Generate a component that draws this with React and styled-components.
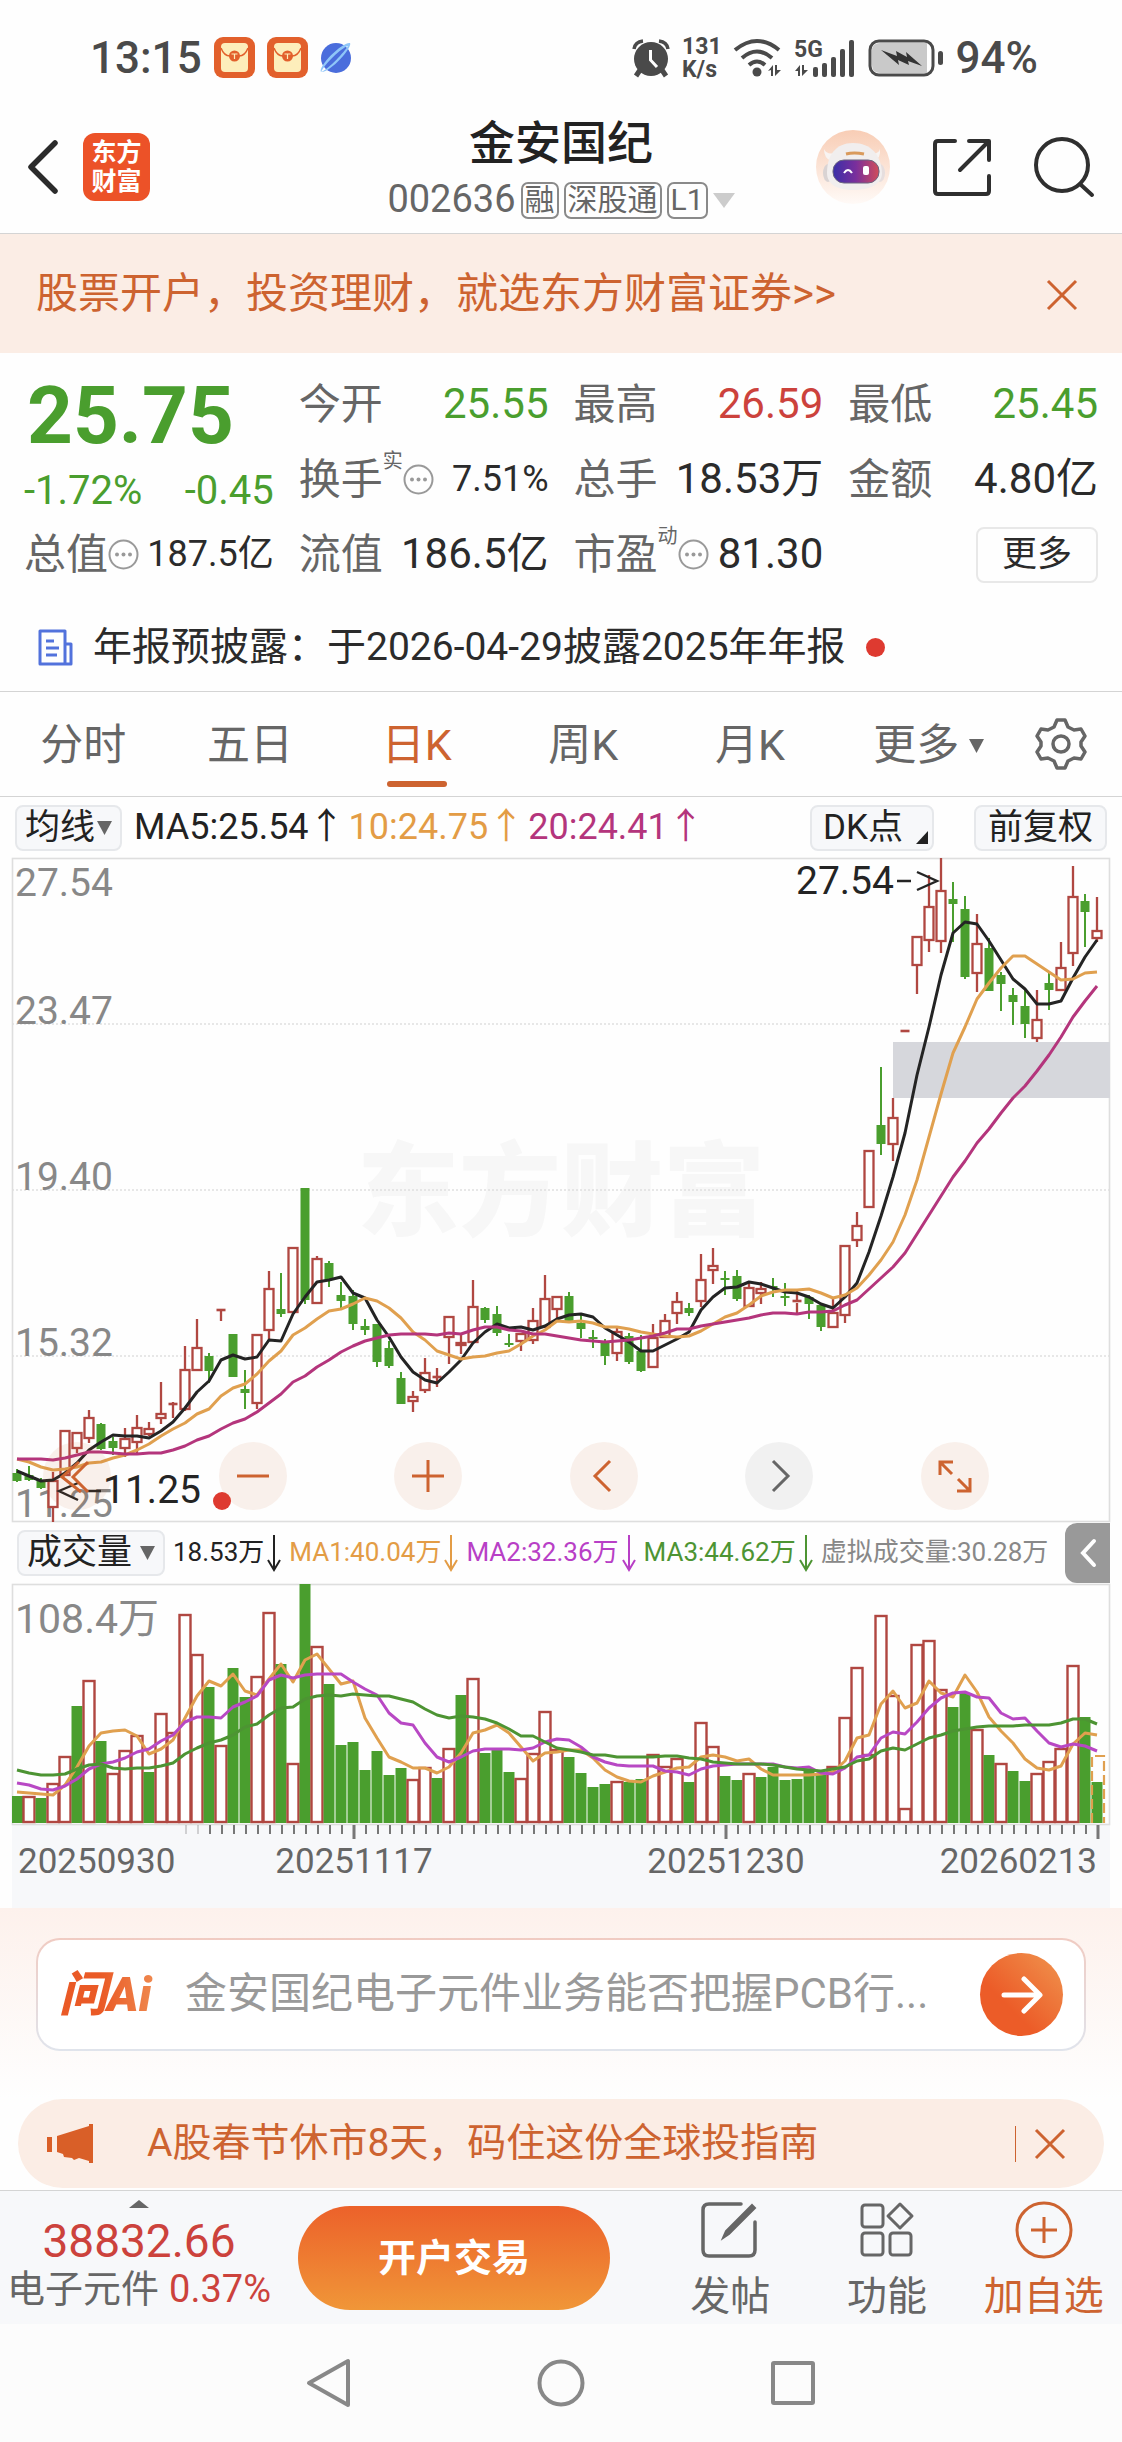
import React, { useState } from 'react'
import styled, { createGlobalStyle } from 'styled-components'

const GlobalStyle = createGlobalStyle`
  * {
    box-sizing: border-box;
  }
  body {
    margin: 0;
    background: #fefefe;
    color: #2b2b2b;
    font-family: Roboto, "Noto Sans CJK SC", sans-serif;
    line-height: 1.2;
  }
  button, input, select {
    margin: 0;
    padding: 0;
    border: none;
    background: none;
    color: inherit;
    font: inherit;
  }
  button {
    cursor: pointer;
  }
  svg {
    display: block;
    flex: none;
    overflow: visible;
  }
`

const GREEN = '#4a9e2e'
const RED = '#cc423c'
const ORANGE = '#cd6330'
const BAR_RED = '#b04741'

const Page = styled.main`
  display: flex;
  flex-direction: column;
  width: 100%;
`

/* ---------- status bar ---------- */

const StatusBar = styled.div`
  display: flex;
  align-items: center;
  justify-content: space-between;
  height: 116px;
  padding: 0 84px 0 90px;
  color: #4a4a4a;
  font-size: 44px;
  font-weight: 500;
`

const StatusGroup = styled.div`
  display: flex;
  align-items: center;
  gap: 12px;
`

const Speed = styled.div`
  display: flex;
  flex-direction: column;
  font-size: 23px;
  font-weight: 700;
  line-height: 23px;
`

/* ---------- header ---------- */

const Header = styled.header`
  display: grid;
  grid-template-columns: 1fr auto 1fr;
  height: 118px;
  border-bottom: 1px solid #d4d4d4;
`

const HeaderSide = styled.div`
  display: flex;
  align-items: center;
  justify-content: ${(p) => (p.$end ? 'flex-end' : 'flex-start')};
  gap: ${(p) => (p.$end ? 43 : 25)}px;
  padding: 0 28px;
  height: 102px;
`

const Logo = styled.a`
  display: flex;
  align-items: center;
  justify-content: center;
  width: 67px;
  height: 68px;
  border-radius: 12px;
  background: #ec5228;
  color: #fff;
  font-size: 25px;
  font-weight: 700;
  line-height: 29px;
  text-align: center;
  text-decoration: none;
`

const TitleBox = styled.div`
  display: flex;
  flex-direction: column;
  align-items: center;
`

const Title = styled.h1`
  margin: 0;
  font-size: 46px;
  font-weight: 500;
  line-height: 54px;
  color: #222;
`

const CodeLine = styled.button`
  display: flex;
  align-items: center;
  gap: 5px;
  height: 60px;
  color: #666;
  font-size: 38px;
`

const Tag = styled.span`
  height: 37px;
  padding: 0 2px;
  border: 2px solid #8a8a8a;
  border-radius: 7px;
  font-size: 30px;
  line-height: 32px;
`

/* ---------- open account banner ---------- */

const Banner = styled.section`
  display: flex;
  align-items: center;
  justify-content: space-between;
  height: 119px;
  padding: 2px 44px 0 36px;
  background: #fbede5;
  color: ${ORANGE};
  font-size: 42px;

  a {
    color: inherit;
    text-decoration: none;
  }
`

/* ---------- quote ---------- */

const Quote = styled.section`
  display: grid;
  grid-template-columns: repeat(4, 1fr);
  grid-auto-rows: 75px;
  column-gap: 25px;
  padding: 14px 24px 0;
`

const Summary = styled.div`
  grid-row: span 2;
  color: ${GREEN};
`

const Price = styled.div`
  padding-left: 3px;
  font-size: 80px;
  font-weight: 700;
  line-height: 98px;
`

const Change = styled.div`
  display: flex;
  justify-content: space-between;
  font-size: 40px;
  line-height: 52px;
`

const Cell = styled.div`
  display: flex;
  align-items: center;
  justify-content: space-between;
  white-space: nowrap;
`

const CellLabel = styled.span`
  display: flex;
  align-items: center;
  color: #666;
  font-size: 42px;
  line-height: 60px;

  sup {
    align-self: flex-start;
    font-size: 20px;
    line-height: 22px;
  }
`

const CellValue = styled.span`
  color: ${(p) => p.$color || '#2b2b2b'};
  font-size: ${(p) => (p.$small ? 36 : 42)}px;
`

const MoreButton = styled.button`
  margin-left: auto;
  width: 122px;
  height: 56px;
  border: 2px solid #e8e8e8;
  border-radius: 8px;
  font-size: 35px;
  line-height: 48px;
`

const Notice = styled.a`
  display: flex;
  align-items: center;
  padding: 30px 38px 19px;
  border-bottom: 1px solid #d4d4d4;
  color: #2b2b2b;
  font-size: 39px;
  line-height: 50px;
  text-decoration: none;

  span {
    margin: 0 20px;
  }
`

const Dot = styled.i`
  width: 19px;
  height: 19px;
  border-radius: 50%;
  background: #de3a30;
`

/* ---------- period tabs ---------- */

const Tabs = styled.nav`
  display: grid;
  grid-template-columns: repeat(6, 1fr) 122px;
  height: 105px;
  border-bottom: 1px solid #d4d4d4;
`

const Tab = styled.button`
  position: relative;
  display: flex;
  align-items: center;
  justify-content: center;
  gap: 10px;
  padding-top: 4px;
  padding-left: ${(p) => (p.$caret ? 24 : 0)}px;
  color: ${(p) => (p.$active ? ORANGE : '#666')};
  font-size: 43px;

  &::after {
    content: "";
    display: ${(p) => (p.$active ? 'block' : 'none')};
    position: absolute;
    left: calc(50% - 30px);
    bottom: 9px;
    width: 60px;
    height: 6px;
    border-radius: 3px;
    background: ${ORANGE};
  }
`

const Gear = styled.button`
  display: flex;
  align-items: center;
  justify-content: center;
`

/* ---------- charts ---------- */

const ChartArea = styled.section`
  padding: 0 12px;
`

const IndicatorRow = styled.div`
  display: flex;
  align-items: center;
  justify-content: space-between;
  height: 61px;
  padding: 0 3px;
  font-size: 36px;
  white-space: nowrap;
`

const IndicatorGroup = styled.div`
  display: flex;
  align-items: center;
  gap: ${(p) => p.$gap}px;
`

const Pill = styled.span`
  position: relative;
  flex: none;
  display: inline-flex;
  align-items: center;
  height: 46px;
  border: 2px solid #e6e8eb;
  border-radius: 8px;
  background: #f7f8fa;
  color: #222;
  font-size: 35px;
  margin-right: ${(p) => p.$after || 0}px;

  select, button {
    height: 42px;
    padding: 0 ${(p) => p.$right || 8}px 0 ${(p) => p.$left || 8}px;
    line-height: 40px;
    appearance: none;
  }
  svg {
    position: absolute;
    right: ${(p) => p.$icon || 8}px;
    bottom: ${(p) => p.$iconBottom || 14}px;
    pointer-events: none;
  }
`

const MaValue = styled.span`
  color: ${(p) => p.$color};
`

const ChartBox = styled.div`
  position: relative;

  > svg {
    width: 100%;
    height: auto;
  }
`

const ChartTools = styled.div`
  position: absolute;
  left: 31px;
  right: 121px;
  bottom: 12px;
  display: flex;
  justify-content: space-between;
`

const RoundTool = styled.button`
  display: flex;
  align-items: center;
  justify-content: center;
  width: 68px;
  height: 68px;
  border-radius: 50%;
  background: ${(p) => (p.$muted ? 'rgba(0, 0, 0, 0.05)' : 'rgba(205, 99, 48, 0.09)')};
  color: ${(p) => (p.$muted ? '#666' : ORANGE)};
`

const VolumeRow = styled.div`
  display: flex;
  align-items: center;
  gap: 8px;
  height: 62px;
  padding-left: 5px;
  font-size: 26px;
  white-space: nowrap;
`

const VolumeValue = styled.span`
  display: inline-flex;
  align-items: center;
  gap: 3px;
  color: ${(p) => p.$color};
`

const Collapse = styled.button`
  flex: none;
  display: flex;
  align-items: center;
  justify-content: center;
  width: 45px;
  height: 60px;
  margin-left: auto;
  border-radius: 12px 0 0 12px;
  background: #999;
`

/* ---------- ask ai + tips ---------- */

const AskSection = styled.section`
  padding: 30px 36px 48px;
  background: linear-gradient(#fdf1ec, #fefefe);
`

const AskBox = styled.form`
  display: flex;
  align-items: center;
  height: 113px;
  padding: 0 21px;
  border: 2px solid transparent;
  border-radius: 24px;
  background:
    linear-gradient(#fff, #fff) padding-box,
    linear-gradient(#f0cbc2, #e0e4ec) border-box;

  input {
    flex: 1;
    min-width: 0;
    margin: 0 24px 0 22px;
    font-size: 42px;
    outline: none;
  }
  input::placeholder {
    color: #999;
    opacity: 1;
  }
`

const AskLogo = styled.span`
  width: 104px;
  font-size: 48px;
  font-style: italic;
  font-weight: 900;
  line-height: 50px;
  color: transparent;
  background: linear-gradient(90deg, #ea5a26 40%, #f09055);
  background-clip: text;
`

const AskSend = styled.button`
  display: flex;
  align-items: center;
  justify-content: center;
  width: 83px;
  height: 83px;
  border-radius: 50%;
  background: linear-gradient(45deg, #ec5c28 35%, #f0954f);
`

const TipBar = styled.section`
  display: flex;
  align-items: center;
  height: 89px;
  margin: 0 18px 2px;
  padding: 0 38px 0 29px;
  border-radius: 45px;
  background: #fbede5;
  color: ${ORANGE};
  font-size: 39px;

  a {
    flex: 1;
    margin-left: 54px;
    color: inherit;
    text-decoration: none;
  }
  button {
    padding-left: 18px;
    border-left: 1px solid ${ORANGE};
    height: 36px;
  }
`

/* ---------- bottom bar ---------- */

const BottomBar = styled.footer`
  display: grid;
  grid-template-columns: 298fr 354fr 470fr;
  height: 134px;
  border-top: 1px solid #d4d4d4;
  background: #f7f8fa;
`

const IndexBox = styled.button`
  display: flex;
  flex-direction: column;
  align-items: center;
  padding: 9px 24px 0 4px;
  white-space: nowrap;
`

const IndexValue = styled.span`
  color: ${RED};
  font-size: 46px;
  line-height: 66px;
`

const IndexName = styled.span`
  color: #666;
  font-size: 38px;
  line-height: 30px;

  b {
    margin-left: 10px;
    color: ${RED};
    font-weight: 400;
  }
`

const TradeButton = styled.button`
  align-self: start;
  height: 104px;
  margin: 15px 42px 0 0;
  padding-top: 2px;
  border-radius: 52px;
  background: linear-gradient(#ec612a, #f09638);
  color: #fff;
  font-size: 38px;
  font-weight: 700;
`

const Actions = styled.div`
  display: grid;
  grid-template-columns: repeat(3, 1fr);
`

const Action = styled.button`
  display: flex;
  flex-direction: column;
  align-items: center;
  padding-top: 9px;
  color: ${(p) => (p.$accent ? ORANGE : '#666')};
  font-size: 40px;
  line-height: 74px;
`

const SystemNav = styled.nav`
  display: flex;
  justify-content: center;
  gap: 184px;
  height: 118px;
  background: #fcfcfc;
`

/* ---------- chart data ---------- */

const STEP = 12
const FIRST = 5
const xOf = (i) => FIRST + i * STEP

// [up, high, top, bottom, low] for each day, in chart units
const candles = [
  [0, 611, 615, 623, 624], [0, 608, 617, 622, 623], [0, 620, 622, 630, 631], [1, 614, 622, 650, 664],
  [1, 572, 572, 618, 618], [1, 574, 574, 591, 595], [1, 552, 559, 581, 585], [0, 565, 566, 591, 592],
  [0, 579, 583, 590, 597], [1, 570, 580, 591, 599], [1, 557, 569, 585, 595], [1, 564, 570, 577, 578],
  [1, 524, 555, 561, 566], [1, 544, 546, 547, 560], [1, 488, 511, 552, 553], [1, 461, 489, 513, 513],
  [0, 495, 498, 513, 525], [1, 451, 452, 452, 463], [0, 476, 476, 519, 519], [0, 512, 531, 535, 551],
  [1, 476, 476, 546, 551], [1, 413, 430, 473, 482], [0, 415, 451, 456, 459], [1, 389, 389, 455, 455],
  [0, 330, 330, 442, 446], [1, 398, 400, 446, 446], [0, 403, 405, 422, 429], [0, 424, 437, 443, 450],
  [0, 432, 438, 466, 472], [0, 461, 468, 472, 477], [0, 466, 466, 504, 509], [0, 483, 490, 508, 510],
  [0, 514, 520, 546, 546], [1, 533, 538, 544, 554], [1, 500, 514, 533, 535], [1, 510, 519, 520, 529],
  [1, 458, 458, 480, 506], [1, 475, 484, 488, 496], [1, 422, 448, 485, 485], [0, 449, 450, 462, 465],
  [0, 448, 456, 475, 478], [0, 476, 485, 486, 489], [1, 475, 475, 484, 493], [1, 450, 462, 483, 486],
  [1, 417, 440, 470, 470], [1, 438, 438, 452, 462], [0, 434, 438, 465, 465], [0, 457, 465, 471, 480],
  [0, 472, 479, 481, 490], [0, 481, 484, 498, 507], [1, 470, 473, 496, 503], [0, 475, 478, 504, 506],
  [0, 477, 493, 513, 514], [1, 466, 479, 510, 510], [1, 456, 462, 480, 480], [1, 434, 443, 456, 466],
  [0, 445, 450, 455, 458], [1, 396, 421, 444, 449], [1, 390, 407, 413, 426], [0, 413, 420, 422, 437],
  [0, 412, 418, 441, 443], [1, 425, 429, 449, 449], [1, 424, 430, 436, 446], [0, 420, 428, 430, 439],
  [0, 425, 438, 439, 448], [1, 432, 443, 445, 455], [0, 437, 439, 446, 461], [0, 445, 447, 469, 473],
  [1, 440, 454, 470, 470], [1, 387, 387, 458, 465], [1, 354, 367, 383, 389], [1, 292, 292, 350, 350],
  [0, 209, 267, 286, 297], [1, 240, 259, 287, 303], [1, 173, 173, 173, 173], [1, 78, 78, 108, 136],
  [1, 17, 48, 83, 94], [1, 0, 32, 84, 95], [0, 24, 41, 46, 84], [0, 38, 51, 119, 121],
  [1, 56, 85, 116, 134], [0, 80, 90, 133, 133], [0, 114, 117, 126, 153], [0, 130, 137, 144, 167],
  [0, 130, 148, 166, 180], [1, 132, 161, 181, 184], [0, 115, 125, 132, 152], [1, 84, 109, 133, 133],
  [1, 8, 38, 96, 108], [0, 36, 43, 54, 89], [1, 39, 72, 81, 84],
]

const ma5 = [
  613, 618, 623, 622, 615, 605, 592, 584, 577, 578, 578, 580, 573, 564, 550, 534, 523, 502, 497, 501,
  499, 482, 483, 456, 439, 424, 422, 419, 435, 440, 462, 479, 499, 514, 522, 525, 514, 502, 485, 474,
  466, 470, 469, 472, 468, 461, 457, 456, 459, 470, 477, 484, 493, 493, 487, 481, 474, 452, 439, 430,
  429, 424, 426, 430, 434, 435, 439, 446, 450, 439, 425, 394, 358, 319, 275, 217, 169, 117, 75, 64,
  66, 83, 102, 121, 131, 146, 146, 143, 120, 99, 82,
]

const ma10 = [
  601, 604, 609, 612, 611, 609, 605, 604, 600, 597, 592, 586, 578, 571, 565, 556, 551, 538, 530, 526,
  516, 503, 493, 477, 470, 461, 453, 451, 446, 440, 443, 450, 460, 474, 482, 493, 497, 501, 499, 498,
  495, 493, 486, 478, 472, 463, 464, 463, 465, 469, 469, 471, 474, 476, 478, 479, 478, 473, 466, 459,
  455, 447, 438, 434, 432, 432, 431, 435, 440, 437, 430, 417, 402, 384, 357, 322, 279, 236, 195, 169,
  141, 125, 110, 98, 98, 106, 114, 122, 121, 115, 114,
]

const ma20 = [
  601, 601, 601, 602, 600, 597, 594, 594, 595, 596, 596, 595, 595, 592, 588, 582, 578, 571, 565, 561,
  554, 545, 536, 524, 518, 509, 502, 494, 488, 483, 480, 477, 476, 476, 476, 477, 475, 476, 472, 469,
  469, 472, 473, 476, 476, 478, 480, 482, 483, 484, 483, 482, 480, 478, 475, 471, 471, 468, 466, 464,
  462, 460, 457, 455, 455, 456, 454, 454, 453, 447, 442, 431, 420, 409, 395, 376, 357, 338, 319, 303,
  285, 271, 255, 240, 228, 213, 197, 179, 159, 143, 128,
]

// [up, top]
const volumes = [
  [0, 212], [1, 212], [0, 214], [1, 199], [1, 172], [0, 122], [1, 96], [0, 157], [1, 189], [1, 166],
  [1, 151], [0, 188], [1, 129], [1, 148], [1, 30], [1, 70], [0, 103], [1, 161], [0, 84], [0, 113],
  [1, 92], [1, 28], [0, 80], [1, 179], [0, 0], [1, 62], [0, 100], [0, 161], [0, 158], [0, 186],
  [0, 167], [0, 191], [0, 184], [1, 195], [1, 183], [0, 194], [1, 164], [0, 111], [1, 94], [0, 169],
  [0, 166], [0, 188], [1, 194], [1, 169], [1, 127], [1, 165], [0, 173], [0, 189], [0, 203], [0, 200],
  [1, 197], [0, 198], [0, 195], [1, 170], [1, 182], [1, 174], [0, 198], [1, 138], [1, 162], [0, 192],
  [0, 196], [1, 189], [0, 193], [0, 183], [0, 196], [0, 195], [0, 187], [0, 191], [1, 182], [1, 133],
  [1, 83], [1, 170], [1, 31], [1, 111], [1, 224], [1, 60], [1, 56], [1, 105], [0, 123], [0, 109],
  [1, 145], [0, 171], [1, 179], [0, 187], [0, 197], [1, 189], [1, 177], [1, 164], [1, 81], [0, 133],
  [0, 198],
]

const volMa1 = [
  208, 209, 210, 211, 201, 183, 162, 149, 147, 146, 152, 170, 165, 156, 134, 112, 97, 102, 90, 107,
  111, 95, 80, 98, 76, 70, 85, 100, 97, 134, 154, 173, 178, 184, 184, 189, 183, 169, 149, 146,
  141, 149, 163, 177, 169, 168, 166, 166, 174, 186, 193, 197, 198, 192, 188, 184, 183, 173, 171, 173,
  177, 175, 185, 191, 191, 191, 191, 190, 188, 177, 154, 151, 120, 107, 124, 119, 97, 109, 113, 91,
  108, 133, 147, 159, 175, 184, 186, 182, 160, 149, 151,
]

const volMa2 = [
  199, 201, 205, 206, 202, 195, 185, 180, 178, 174, 168, 165, 157, 151, 138, 133, 133, 134, 123, 118,
  112, 96, 91, 94, 91, 90, 90, 90, 98, 105, 111, 129, 139, 141, 159, 173, 178, 173, 167, 165,
  165, 165, 166, 164, 158, 155, 156, 163, 173, 178, 181, 182, 182, 182, 187, 188, 191, 185, 182, 181,
  180, 180, 180, 180, 183, 184, 183, 189, 190, 184, 173, 171, 154, 148, 150, 138, 124, 114, 109, 108,
  113, 114, 129, 135, 134, 147, 159, 163, 160, 162, 167,
]

const volMa3 = [
  186, 189, 191, 191, 190, 185, 181, 180, 184, 185, 184, 184, 182, 179, 170, 164, 159, 156, 151, 143,
  140, 131, 124, 123, 115, 112, 111, 112, 110, 111, 112, 112, 115, 118, 125, 131, 134, 132, 133, 135,
  139, 145, 152, 152, 158, 164, 166, 168, 171, 171, 173, 173, 173, 173, 172, 172, 174, 175, 178, 179,
  180, 180, 180, 181, 183, 185, 186, 187, 185, 183, 177, 175, 167, 164, 166, 160, 154, 151, 147, 145,
  143, 142, 142, 142, 141, 141, 141, 139, 135, 135, 140,
]

const toPoints = (values) => values.map((y, i) => `${xOf(i)},${y}`).join(' ')

const Line = ({ values, color }) => (
  <polyline points={toPoints(values)} fill="none" stroke={color} strokeWidth="3" strokeLinejoin="round" />
)

const Candle = ({ i, data }) => {
  const [up, high, top, bottom, low] = data
  const x = xOf(i)
  if (!up) {
    return (
      <g fill={GREEN}>
        <rect x={x - 1} y={high} width="2" height={low - high} />
        <rect x={x - 4.5} y={top} width="9" height={Math.max(bottom - top, 2)} />
      </g>
    )
  }
  return (
    <g stroke={BAR_RED} strokeWidth="2.3" fill="#fff">
      <path d={`M${x} ${high}V${top}M${x} ${bottom}V${low}`} />
      {bottom - top < 3 ? (
        <path d={`M${x - 4.5} ${top}h9`} strokeWidth="2.6" />
      ) : (
        <rect x={x - 4.5} y={top + 1} width="9" height={bottom - top - 2} />
      )}
    </g>
  )
}

const PRICE_LABELS = [
  ['27.54', 38],
  ['23.47', 166],
  ['19.40', 332],
  ['15.32', 498],
  ['11.25', 659],
]

function PriceChart() {
  return (
    <svg viewBox="0 0 1098 664" fontFamily='Roboto, "Noto Sans CJK SC", sans-serif'>
      <text x="549" y="370" textAnchor="middle" fontSize="102" fontWeight="900" fill="#f7f7f7">东方财富</text>
      {[166, 332, 498].map((y) => (
        <line key={y} x1="0" x2="1098" y1={y} y2={y} stroke="#e0e0e0" strokeWidth="1.5" strokeDasharray="2 2" />
      ))}
      <rect x="0.5" y="0.5" width="1097" height="663" fill="none" stroke="#dedede" strokeWidth="1.6" />
      {PRICE_LABELS.map(([label, y]) => (
        <text key={label} x="3" y={y} fontSize="39" fill="#888">{label}</text>
      ))}
      <rect x="881" y="184" width="217" height="56" fill="#d6d7dc" />
      {candles.map((c, i) => <Candle key={i} i={i} data={c} />)}
      <Line values={ma5} color="#242424" />
      <Line values={ma10} color="#e0a04f" />
      <Line values={ma20} color="#b4357c" />
      <g fill="#242424" fontSize="39">
        <text x="784" y="36">27.54</text>
        <text x="189" y="645" textAnchor="end">11.25</text>
      </g>
      <path d="M885 23h14M905 14l20 9l-20 9M75 633h14M66 625l-19 8l19 9" fill="none" stroke="#242424" strokeWidth="2.4" />
      <circle cx="210" cy="643" r="9" fill="#de3a30" />
    </svg>
  )
}

const BIG_TICKS = [28, 59, 90]

function VolumeChart() {
  return (
    <svg viewBox="0 0 1098 324" fontFamily='Roboto, "Noto Sans CJK SC", sans-serif'>
      <rect x="0" y="240" width="1098" height="84" fill="#f7f8fa" />
      <rect x="0.5" y="0.5" width="1097" height="240" fill="#fefefe" stroke="#dedede" strokeWidth="1.6" />
      <text x="3" y="49" fontSize="41" fill="#888">108.4万</text>
      {volumes.map(([up, top], i) =>
        up ? (
          <rect key={i} x={xOf(i) - 5.5} y={top + 1} width="11" height={237 - top} fill="#fff" stroke={BAR_RED} strokeWidth="2.4" />
        ) : (
          <rect key={i} x={Math.max(xOf(i) - 5.5, 0)} y={top} width="11" height={239 - top} fill={GREEN} />
        )
      )}
      <path d="M1080 239V172H1092V239" fill="none" stroke="#e0a04f" strokeWidth="2.2" strokeDasharray="10 4" />
      <Line values={volMa1} color="#e0a04f" />
      <Line values={volMa2} color="#b848c4" />
      <Line values={volMa3} color="#4d9433" />
      {volumes.map((_, i) => {
        if (i < 14) return null
        const big = BIG_TICKS.includes(i)
        return (
          <line
            key={i}
            x1={xOf(i) + 1}
            x2={xOf(i) + 1}
            y1="241"
            y2={big ? 255 : 250}
            stroke="#777"
            strokeWidth={big ? 3 : 2}
            opacity={i < 16 ? 0.3 : 1}
          />
        )
      })}
      <g fill="#666" fontSize="35">
        <text x="6" y="289">20250930</text>
        <text x="342" y="289" textAnchor="middle">20251117</text>
        <text x="714" y="289" textAnchor="middle">20251230</text>
        <text x="1085" y="289" textAnchor="end">20260213</text>
      </g>
    </svg>
  )
}

/* ---------- icons ---------- */

const CloseIcon = () => (
  <svg width="32" height="32" viewBox="0 0 32 32" stroke={ORANGE} strokeWidth="3">
    <path d="M2 2L30 30M30 2L2 30" />
  </svg>
)

const InfoIcon = () => (
  <svg width="31" height="31" viewBox="0 0 31 31">
    <circle cx="15.5" cy="15.5" r="14" fill="none" stroke="#999" strokeWidth="2" />
    <g fill="#999">
      <circle cx="9" cy="15.5" r="2" />
      <circle cx="15.5" cy="15.5" r="2" />
      <circle cx="22" cy="15.5" r="2" />
    </g>
  </svg>
)

const Triangle = ({ w = 14, h = 12, color = '#666', up }) => (
  <svg width={w} height={h} viewBox="0 0 14 12" preserveAspectRatio="none">
    <path d={up ? 'M0 12H14L7 0Z' : 'M0 0H14L7 12Z'} fill={color} />
  </svg>
)

const PacketIcon = () => (
  <svg width="41" height="41" viewBox="0 0 41 41">
    <rect width="41" height="41" rx="9" fill="#e2602c" />
    <rect x="7" y="6" width="27" height="29" rx="4" fill="#fdeebb" />
    <path d="M7 11Q10 19 16 19M34 11Q31 19 25 19" fill="none" stroke="#e2602c" strokeWidth="1.5" />
    <circle cx="20.5" cy="19" r="5.5" fill="#e2602c" />
    <path d="M17.5 17h6M20.5 17v5" stroke="#fdeebb" strokeWidth="1.2" />
  </svg>
)

const PlanetIcon = () => (
  <svg width="32" height="32" viewBox="0 0 32 32">
    <circle cx="16" cy="16" r="15" fill="#4a6ddc" />
    <path d="M1 30C-2 24 22 0 30 1C33 5 10 31 1 30C8 28 25 9 28 4C21 6 5 22 1 30Z" fill="#8fc6f8" />
  </svg>
)

const AlarmIcon = () => (
  <svg width="38" height="38" viewBox="0 0 38 38">
    <circle cx="19" cy="20" r="17" fill="#4a4a4a" />
    <path d="M2 10Q3 3 11 2M27 2Q35 3 36 10" fill="none" stroke="#4a4a4a" strokeWidth="3.5" />
    <path d="M8 31L4 37M30 31L34 37" stroke="#4a4a4a" strokeWidth="5" />
    <path d="M18.5 11V21L25 28" fill="none" stroke="#fff" strokeWidth="3" />
  </svg>
)

const WifiIcon = () => (
  <svg width="48" height="38" viewBox="0 0 48 38">
    <g fill="none" stroke="#4a4a4a" strokeWidth="4">
      <path d="M1 11Q23 -7 45 11" />
      <path d="M8 19Q23 6 38 19" />
      <path d="M15 26Q23 19 31 26" />
    </g>
    <circle cx="23" cy="33" r="4.5" fill="#4a4a4a" />
    <path d="M34 32L39 26V37H37V31ZM41 26V37L47 31H43V26Z" fill="#4a4a4a" />
  </svg>
)

const SignalIcon = () => (
  <svg width="62" height="38" viewBox="0 0 62 38" fill="#4a4a4a">
    <text x="0" y="18" fontSize="23" fontWeight="700" fontFamily="Roboto, sans-serif">5G</text>
    <path d="M1 32L6 26V37H4V32ZM8 26V37L14 31H10V26Z" />
    <rect x="19" y="28" width="5" height="10" rx="2" />
    <rect x="28" y="24" width="5" height="14" rx="2" />
    <rect x="37" y="18" width="5" height="20" rx="2" />
    <rect x="46" y="10" width="5" height="28" rx="2" />
    <rect x="55" y="1" width="5" height="37" rx="2" />
  </svg>
)

const BatteryIcon = () => (
  <svg width="76" height="38" viewBox="0 0 76 38">
    <rect x="2" y="2" width="63" height="34" rx="9" fill="#fff" stroke="#4a4a4a" strokeWidth="3" />
    <path d="M12 4H59V34H12Q4 34 4 26V12Q4 4 12 4Z" fill="#c9c9c9" />
    <path d="M13 11L29 17L28 12L39 18L38 13L54 27L40 22L41 26L30 21L31 26Z" fill="#333" />
    <rect x="70" y="12" width="5" height="14" rx="2.5" fill="#4a4a4a" />
  </svg>
)

const BackIcon = () => (
  <svg width="30" height="54" viewBox="0 0 30 54">
    <path d="M27 3L3 27L27 51" fill="none" stroke="#2b2b2b" strokeWidth="5.5" strokeLinecap="round" strokeLinejoin="round" />
  </svg>
)

const RobotIcon = () => (
  <svg width="74" height="74" viewBox="0 0 74 74">
    <defs>
      <linearGradient id="robotBg" x2="0" y2="1">
        <stop offset="0" stopColor="#f8cdb5" />
        <stop offset="1" stopColor="#fffaf7" />
      </linearGradient>
      <linearGradient id="robotFace">
        <stop offset="0" stopColor="#3a2fa8" />
        <stop offset="0.5" stopColor="#7a2f9c" />
        <stop offset="1" stopColor="#d24d5a" />
      </linearGradient>
    </defs>
    <circle cx="37" cy="37" r="37" fill="url(#robotBg)" />
    <path d="M8 19Q8 28 15 31L22 22Q11 26 8 19ZM64 19Q65 28 58 31L51 22Q62 26 64 19Z" fill="#f8f4f2" />
    <ellipse cx="12" cy="43" rx="5" ry="9" fill="#d9d3d3" />
    <ellipse cx="64" cy="43" rx="5" ry="9" fill="#e6dede" />
    <path d="M37 13C55 13 65 25 66 43C66 54 54 60 37 60C21 60 11 54 11 43C11 25 20 13 37 13Z" fill="#f1eeee" />
    <rect x="17" y="30" width="46" height="23" rx="11" fill="url(#robotFace)" stroke="#6a6580" strokeWidth="1" />
    <path d="M28 43Q32 37 36 43" fill="none" stroke="#fff" strokeWidth="2" />
    <rect x="47" y="36" width="6" height="9" rx="2" fill="#fff" />
    <path d="M30 24Q38 22 48 24" fill="none" stroke="#d99a5c" strokeWidth="3" />
  </svg>
)

const ShareIcon = () => (
  <svg width="58" height="58" viewBox="0 0 58 58" fill="none" stroke="#2f2f2f" strokeWidth="4" strokeLinecap="round" strokeLinejoin="round">
    <path d="M22 3H5Q2 3 2 6V53Q2 56 5 56H53Q56 56 56 53V38M36 3H56V22M55 4L27 32" />
  </svg>
)

const SearchIcon = () => (
  <svg width="60" height="60" viewBox="0 0 60 60" fill="none" stroke="#2f2f2f" strokeWidth="4" strokeLinecap="round">
    <circle cx="28" cy="28" r="26" />
    <path d="M46 47L58 58" />
  </svg>
)

const NewsIcon = () => (
  <svg width="35" height="37" viewBox="0 0 35 37" fill="none" stroke="#5272dc" strokeWidth="3" strokeLinejoin="round">
    <path d="M27 35H2V2H27V35H33V15H27" />
    <path d="M8 12H16M8 19H21M8 26H19" />
  </svg>
)

const GearIcon = () => (
  <svg width="52" height="52" viewBox="0 0 52 52" fill="none" stroke="#666" strokeWidth="3.5" strokeLinejoin="round">
    <path d="M22 2H30L33 9L39 12L46 11L50 18L46 24V28L50 34L46 41L39 40L33 43L30 50H22L19 43L13 40L6 41L2 34L6 28V24L2 18L6 11L13 12L19 9Z" />
    <circle cx="26" cy="26" r="8" />
  </svg>
)

const DownArrow = () => (
  <svg width="14" height="36" viewBox="0 0 14 36" fill="none" stroke="currentColor" strokeWidth="2">
    <path d="M7 0V35M1 25L7 35L13 25" />
  </svg>
)

const ToolIcon = ({ d }) => (
  <svg width="40" height="40" viewBox="0 0 40 40" fill="none" stroke="currentColor" strokeWidth="3">
    <path d={d} />
  </svg>
)

const HornIcon = () => (
  <svg width="46" height="40" viewBox="0 0 46 40" fill="#d95f28">
    <path d="M0 13H5V28H0ZM10 12L42 2V0H46V39H42V37L32 34L27 36L25 34L17 33L16 30L10 28Z" />
  </svg>
)

const TOOLS = [
  ['收起', 'M22 6L5 21L24 36M31 6L16 21L31 36'],
  ['缩小', 'M4 20H36'],
  ['放大', 'M4 20H36M20 4V36'],
  ['左移', 'M26 5L11 20L26 35'],
  ['右移', 'M14 5L29 20L14 35'],
  ['全屏', 'M5 19V6H18M5 6L17 18M35 22V35H22M35 35L23 23'],
]

const TABS = ['分时', '五日', '日K', '周K', '月K', '更多']

function App() {
  const [tab, setTab] = useState('日K')
  const [showBanner, setShowBanner] = useState(true)
  const [showTip, setShowTip] = useState(true)

  return (
    <Page>
      <GlobalStyle />

      <StatusBar>
        <StatusGroup>
          <span>13:15</span>
          <PacketIcon />
          <PacketIcon />
          <PlanetIcon />
        </StatusGroup>
        <StatusGroup>
          <AlarmIcon />
          <Speed><span>131</span><span>K/s</span></Speed>
          <WifiIcon />
          <SignalIcon />
          <BatteryIcon />
          <span>94%</span>
        </StatusGroup>
      </StatusBar>

      <Header>
        <HeaderSide>
          <button aria-label="返回"><BackIcon /></button>
          <Logo href="#home">东方<br />财富</Logo>
        </HeaderSide>
        <TitleBox>
          <Title>金安国纪</Title>
          <CodeLine>
            002636
            <Tag>融</Tag>
            <Tag>深股通</Tag>
            <Tag>L1</Tag>
            <Triangle w={22} h={15} color="#ccc" />
          </CodeLine>
        </TitleBox>
        <HeaderSide $end>
          <button aria-label="助手"><RobotIcon /></button>
          <button aria-label="分享"><ShareIcon /></button>
          <button aria-label="搜索"><SearchIcon /></button>
        </HeaderSide>
      </Header>

      {showBanner && (
        <Banner>
          <a href="#open">股票开户，投资理财，就选东方财富证券&gt;&gt;</a>
          <button aria-label="关闭" onClick={() => setShowBanner(false)}><CloseIcon /></button>
        </Banner>
      )}

      <Quote>
        <Summary>
          <Price>25.75</Price>
          <Change><span>-1.72%</span><span>-0.45</span></Change>
        </Summary>
        <Cell><CellLabel>今开</CellLabel><CellValue $color={GREEN}>25.55</CellValue></Cell>
        <Cell><CellLabel>最高</CellLabel><CellValue $color={RED}>26.59</CellValue></Cell>
        <Cell><CellLabel>最低</CellLabel><CellValue $color={GREEN}>25.45</CellValue></Cell>
        <Cell><CellLabel>换手<sup>实</sup><InfoIcon /></CellLabel><CellValue $small>7.51%</CellValue></Cell>
        <Cell><CellLabel>总手</CellLabel><CellValue>18.53万</CellValue></Cell>
        <Cell><CellLabel>金额</CellLabel><CellValue>4.80亿</CellValue></Cell>
        <Cell><CellLabel>总值<InfoIcon /></CellLabel><CellValue $small>187.5亿</CellValue></Cell>
        <Cell><CellLabel>流值</CellLabel><CellValue>186.5亿</CellValue></Cell>
        <Cell><CellLabel>市盈<sup>动</sup><InfoIcon /></CellLabel><CellValue>81.30</CellValue></Cell>
        <Cell><MoreButton>更多</MoreButton></Cell>
      </Quote>

      <Notice href="#notice">
        <NewsIcon />
        <span>年报预披露：于2026-04-29披露2025年年报</span>
        <Dot />
      </Notice>

      <Tabs>
        {TABS.map((name) => (
          <Tab key={name} $active={tab === name} $caret={name === '更多'} onClick={() => setTab(name)}>
            {name}
            {name === '更多' && <Triangle w={15} h={14} />}
          </Tab>
        ))}
        <Gear aria-label="设置"><GearIcon /></Gear>
      </Tabs>

      <ChartArea>
        <IndicatorRow>
          <IndicatorGroup $gap={4}>
            <Pill $right={24} $after={8}>
              <select aria-label="主图指标" defaultValue="均线">
                <option>均线</option>
              </select>
              <Triangle w={15} h={14} />
            </Pill>
            <MaValue $color="#222">MA5:25.54↑</MaValue>
            <MaValue $color="#e39c45">10:24.75↑</MaValue>
            <MaValue $color="#b4357c">20:24.41↑</MaValue>
          </IndicatorGroup>
          <IndicatorGroup $gap={40}>
            <Pill $left={11} $right={29} $icon={4} $iconBottom={5}>
              <button>DK点</button>
              <svg width="12" height="13" viewBox="0 0 12 13"><path d="M12 0V13H0Z" fill="#222" /></svg>
            </Pill>
            <Pill $left={12} $right={12}>
              <button>前复权</button>
            </Pill>
          </IndicatorGroup>
        </IndicatorRow>

        <ChartBox>
          <PriceChart />
          <ChartTools>
            {TOOLS.map(([label, d]) => (
              <RoundTool key={label} aria-label={label} $muted={label === '右移'}>
                <ToolIcon d={d} />
              </RoundTool>
            ))}
          </ChartTools>
        </ChartBox>

        <VolumeRow>
          <Pill $right={30}>
            <select aria-label="副图指标" defaultValue="成交量">
              <option>成交量</option>
            </select>
            <Triangle w={15} h={14} />
          </Pill>
          <VolumeValue $color="#222">18.53万<DownArrow /></VolumeValue>
          <VolumeValue $color="#e39c45">MA1:40.04万<DownArrow /></VolumeValue>
          <VolumeValue $color="#b83fc6">MA2:32.36万<DownArrow /></VolumeValue>
          <VolumeValue $color="#4d9433">MA3:44.62万<DownArrow /></VolumeValue>
          <VolumeValue $color="#888">虚拟成交量:30.28万</VolumeValue>
          <Collapse aria-label="展开">
            <svg width="16" height="28" viewBox="0 0 16 28">
              <path d="M14 2L3 14L14 26" fill="none" stroke="#fff" strokeWidth="4" strokeLinecap="round" />
            </svg>
          </Collapse>
        </VolumeRow>

        <ChartBox>
          <VolumeChart />
        </ChartBox>
      </ChartArea>

      <AskSection>
        <AskBox onSubmit={(e) => e.preventDefault()}>
          <AskLogo>问Ai</AskLogo>
          <input type="text" aria-label="问AI" placeholder="金安国纪电子元件业务能否把握PCB行..." />
          <AskSend type="submit" aria-label="发送">
            <svg width="42" height="38" viewBox="0 0 42 38" fill="none" stroke="#fff" strokeWidth="5" strokeLinecap="round" strokeLinejoin="round">
              <path d="M3 19H38M23 3L39 19L23 35" />
            </svg>
          </AskSend>
        </AskBox>
      </AskSection>

      {showTip && (
        <TipBar>
          <HornIcon />
          <a href="#tip">A股春节休市8天，码住这份全球投指南</a>
          <button aria-label="关闭" onClick={() => setShowTip(false)}><CloseIcon /></button>
        </TipBar>
      )}

      <BottomBar>
        <IndexBox>
          <Triangle w={20} h={8} up />
          <IndexValue>38832.66</IndexValue>
          <IndexName>电子元件<b>0.37%</b></IndexName>
        </IndexBox>
        <TradeButton>开户交易</TradeButton>
        <Actions>
          <Action>
            <svg width="60" height="60" viewBox="0 0 60 60" fill="none" stroke="#666" strokeWidth="3.5" strokeLinecap="round">
              <path d="M41 4H9Q3 4 3 10V50Q3 56 9 56H49Q55 56 55 50V22" />
              <path d="M23 38L26 31L52 5L55 8L29 34Z" fill="#666" strokeWidth="2" />
            </svg>
            发帖
          </Action>
          <Action>
            <svg width="60" height="60" viewBox="0 0 60 60" fill="none" stroke="#666" strokeWidth="3">
              <rect x="5" y="5" width="21" height="22" rx="3" />
              <path d="M43 4L55 16L43 28L31 16Z" strokeLinejoin="round" />
              <rect x="5" y="33" width="21" height="22" rx="3" />
              <rect x="33" y="33" width="21" height="22" rx="3" />
            </svg>
            功能
          </Action>
          <Action $accent>
            <svg width="60" height="60" viewBox="0 0 60 60" fill="none" stroke={ORANGE} strokeWidth="3">
              <circle cx="30" cy="30" r="27" />
              <path d="M17 30H43M30 17V43" />
            </svg>
            加自选
          </Action>
        </Actions>
      </BottomBar>

      <SystemNav>
        <button aria-label="后退">
          <svg width="48" height="48" viewBox="0 0 48 48" fill="none" stroke="#888" strokeWidth="4" strokeLinejoin="round">
            <path d="M43 2V46L4 24Z" />
          </svg>
        </button>
        <button aria-label="主页">
          <svg width="48" height="48" viewBox="0 0 48 48" fill="none" stroke="#888" strokeWidth="4">
            <circle cx="24" cy="24" r="21.5" />
          </svg>
        </button>
        <button aria-label="最近任务">
          <svg width="48" height="48" viewBox="0 0 48 48" fill="none" stroke="#888" strokeWidth="4" strokeLinejoin="round">
            <rect x="4" y="4" width="40" height="40" rx="1" />
          </svg>
        </button>
      </SystemNav>
    </Page>
  )
}

export default App
